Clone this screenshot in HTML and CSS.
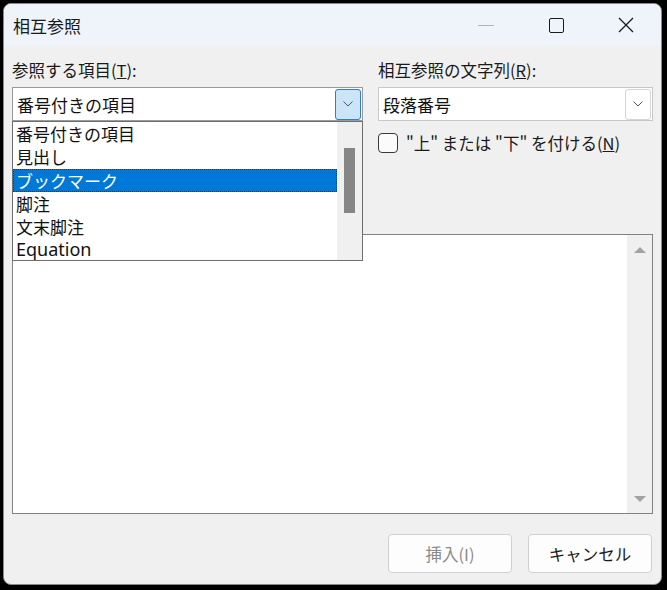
FILE: index.html
```html
<!DOCTYPE html>
<html lang="ja">
<head>
<meta charset="utf-8">
<title>相互参照</title>
<link rel="stylesheet" href="styles.css">
</head>
<body>
<div class="window">
  <div class="titlebar">
    <div class="title">相互参照</div>
    <div class="controls">
      <div class="ctrl"><span class="min-line"></span></div>
      <div class="ctrl"><span class="max-box"></span></div>
      <div class="ctrl">
        <svg width="16" height="16" viewBox="0 0 16 16"><path d="M1 1 L15 15 M15 1 L1 15" stroke="#1a1a1a" stroke-width="1.3" fill="none"/></svg>
      </div>
    </div>
  </div>
  <div class="content">
    <div class="columns">
      <div class="col col-left">
        <div class="label">参照する項目(<u>T</u>):</div>
        <div class="combo combo-active">
          <span class="combo-text">番号付きの項目</span>
          <span class="drop-btn drop-btn-active">
            <svg width="10" height="6" viewBox="0 0 10 6"><polyline points="0.5,0.5 5,5 9.5,0.5" fill="none" stroke="#555" stroke-width="1"/></svg>
          </span>
        </div>
        <div class="dropdown">
          <ul class="items">
            <li>番号付きの項目</li>
            <li>見出し</li>
            <li class="selected">ブックマーク</li>
            <li>脚注</li>
            <li>文末脚注</li>
            <li class="latin">Equation</li>
          </ul>
          <div class="vscroll"><span class="thumb"></span></div>
        </div>
      </div>
      <div class="col col-right">
        <div class="label">相互参照の文字列(<u>R</u>):</div>
        <div class="combo">
          <span class="combo-text">段落番号</span>
          <span class="drop-btn">
            <svg width="10" height="6" viewBox="0 0 10 6"><polyline points="0.5,0.5 5,5 9.5,0.5" fill="none" stroke="#555" stroke-width="1"/></svg>
          </span>
        </div>
        <div class="check-row">
          <span class="checkbox"></span>
          <span class="check-label">"上" または "下" を付ける(<u>N</u>)</span>
        </div>
      </div>
    </div>
    <div class="listbox">
      <div class="list-area"></div>
      <div class="list-scroll">
        <span class="arrow-up"></span>
        <span class="arrow-down"></span>
      </div>
    </div>
    <div class="buttons">
      <button class="btn btn-disabled">挿入(I)</button>
      <button class="btn">キャンセル</button>
    </div>
  </div>
</div>
</body>
</html>
```
FILE: styles.css
```css
* { box-sizing: border-box; }
html, body { margin: 0; padding: 0; }
body {
  width: 667px;
  height: 590px;
  overflow: hidden;
  background: #000;
  font-family: "Noto Sans", "Noto Sans CJK JP", sans-serif;
  color: #000;
}
.window {
  margin: 3px 0 0 3px;
  width: 659px;
  height: 582px;
  background: #f0f0f0;
  border-radius: 8px;
  overflow: hidden;
  position: relative;
  border: 1px solid #8a8a8a;
}
.titlebar {
  height: 42px;
  background: #eef4f9;
  display: flex;
  align-items: center;
  justify-content: space-between;
}
.title {
  padding-left: 9px;
  font-size: 17px;
  font-family: "Noto Sans CJK JP", sans-serif;
  color: #1a1a1a;
}
.controls { display: flex; height: 100%; }
.ctrl {
  width: 70px;
  height: 100%;
  display: flex;
  align-items: center;
  justify-content: center;
}
.min-line { width: 16px; height: 1px; background: #b5b5b5; }
.max-box { width: 15px; height: 15px; border: 1.3px solid #1a1a1a; border-radius: 2px; }
.content {
  padding: 13px 9px 0 8px;
  display: flex;
  flex-direction: column;
}
.columns {
  display: grid;
  grid-template-columns: 351px 275px;
  column-gap: 15px;
}
.col { position: relative; display: flex; flex-direction: column; }
.label {
  font-size: 16.5px;
  line-height: 22px;
  font-family: "Noto Sans CJK JP", sans-serif;
  margin-bottom: 6px;
  color: #1a1a1a;
}
.combo {
  height: 34px;
  background: #fff;
  border: 1px solid #c8c8c8;
  display: flex;
  align-items: center;
  justify-content: space-between;
  padding: 0 1px 0 4px;
}
.combo-active { border-color: #9a9a9a; }
.combo-text {
  font-size: 17px;
  font-family: "Noto Sans CJK JP", sans-serif;
  color: #111;
}
.drop-btn {
  width: 26px;
  height: 31px;
  border: 1px solid #d6d6d6;
  border-radius: 3px;
  display: flex;
  align-items: center;
  justify-content: center;
}
.drop-btn-active {
  background: #cce4f7;
  border-color: #2f7fc7;
}
.dropdown {
  position: absolute;
  left: 0;
  top: 62px;
  width: 351px;
  height: 140px;
  background: #fff;
  border: 1px solid #6e6e6e;
  display: flex;
  z-index: 5;
}
.items {
  list-style: none;
  margin: 0;
  padding: 0;
  flex: 1;
}
.items li {
  height: 23.3px;
  line-height: 23.3px;
  font-size: 17px;
  font-family: "Noto Sans CJK JP", sans-serif;
  padding-left: 3px;
  color: #111;
  white-space: nowrap;
}
.items li.latin { font-family: "Noto Sans", sans-serif; font-size: 18px; }
.items li.selected {
  background: #0078d7;
  color: #fff;
  outline: 1px dotted #1a3f66;
  outline-offset: -1px;
}
.vscroll {
  width: 25px;
  background: #f0f0f0;
  position: relative;
}
.thumb {
  position: absolute;
  left: 7px;
  top: 26px;
  width: 11px;
  height: 65px;
  background: #868686;
}
.check-row {
  display: flex;
  align-items: center;
  margin-top: 12px;
  height: 20px;
  gap: 8px;
}
.checkbox {
  width: 20px;
  height: 20px;
  border: 1px solid #3a3a3a;
  border-radius: 4px;
  background: #fbfbfb;
}
.check-label {
  font-size: 16.5px;
  font-family: "Noto Sans CJK JP", sans-serif;
  color: #1a1a1a;
}
.listbox {
  margin-top: 81px;
  height: 280px;
  width: 641px;
  background: #fff;
  border: 1px solid #828282;
  display: flex;
}
.list-area { flex: 1; }
.list-scroll {
  width: 25px;
  background: #f0f0f0;
  display: flex;
  flex-direction: column;
  justify-content: space-between;
  align-items: center;
  padding: 12px 0 11px;
}
.arrow-up {
  width: 0; height: 0;
  border-left: 6px solid transparent;
  border-right: 6px solid transparent;
  border-bottom: 6px solid #a3a3a3;
}
.arrow-down {
  width: 0; height: 0;
  border-left: 6px solid transparent;
  border-right: 6px solid transparent;
  border-top: 6px solid #a3a3a3;
}
.buttons {
  display: flex;
  justify-content: flex-end;
  gap: 16px;
  margin-top: 20px;
}
.btn {
  width: 124px;
  height: 39px;
  background: #fdfdfd;
  border: 1px solid #d0d0d0;
  border-radius: 4px;
  font-size: 16.5px;
  font-family: "Noto Sans CJK JP", sans-serif;
  color: #1a1a1a;
  padding: 0;
}
.btn-disabled { color: #8a8a8a; }
```
